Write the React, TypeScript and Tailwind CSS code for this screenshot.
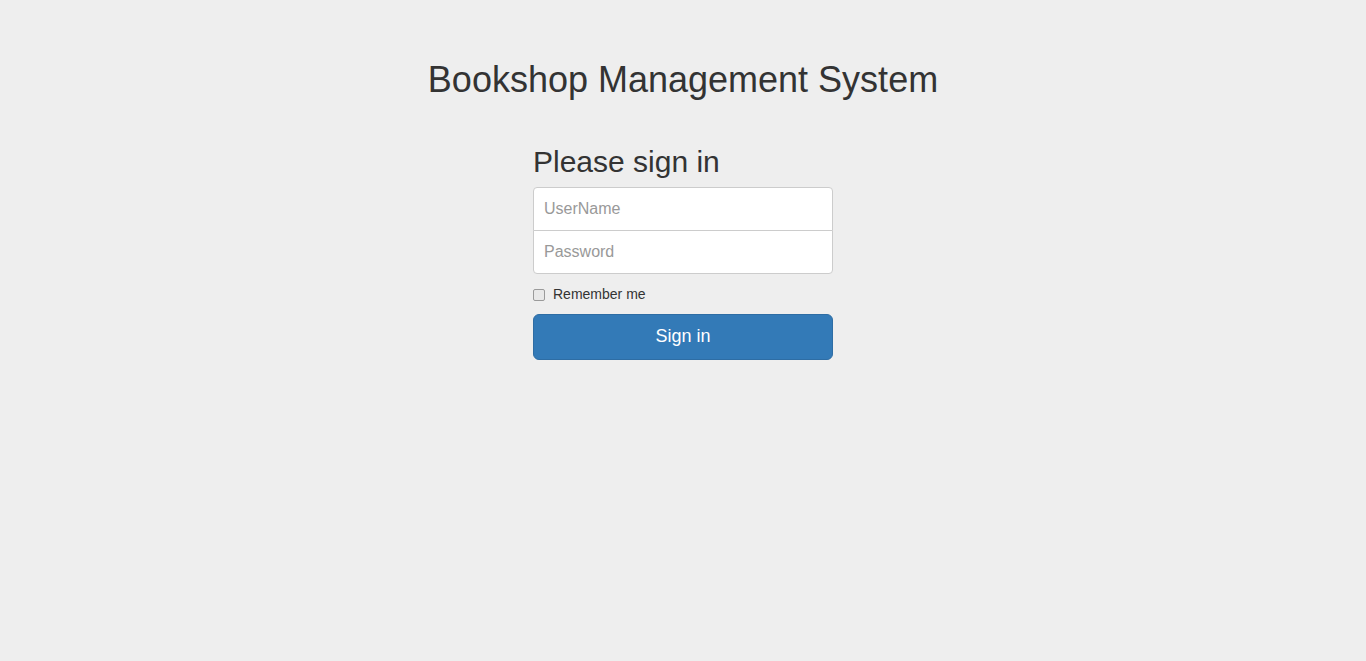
import React from 'react';

const App: React.FC = () => {
  return (
    <div className="min-h-[661px] bg-[#eeeeee] pt-10 text-[#333333] font-['Liberation_Sans',Arial,sans-serif]">
      <h1 className="mt-5 mb-[10px] text-center text-[36px] leading-[1.1] font-normal">Bookshop Management System</h1>

      <form className="mx-auto w-[330px] p-[15px]" onSubmit={e => e.preventDefault()}>
        <h2 className="mt-5 mb-[9px] text-[30px] leading-[1.1] font-normal">Please sign in</h2>
        <input
          type="text"
          placeholder="UserName"
          className="block w-full h-[44px] px-[10px] text-[16px] bg-white border border-[#cccccc] rounded-t-[4px] outline-none placeholder:text-[#999999]"
        />
        <input
          type="password"
          placeholder="Password"
          className="block w-full h-[44px] -mt-px px-[10px] text-[16px] bg-white border border-[#cccccc] rounded-b-[4px] outline-none placeholder:text-[#999999]"
        />
        <label className="flex items-center h-5 mt-[11px] mb-[9px] text-[14px]">
          <input
            type="checkbox"
            className="appearance-none w-[12px] h-[12px] m-0 mr-[8px] border border-[#9a9a9a] rounded-[2px] bg-[#e8e8e8]"
          />
          Remember me
        </label>
        <button
          type="submit"
          className="block w-full h-[46px] text-[18px] text-white bg-[#337ab7] border border-[#2e6da4] rounded-[6px]"
        >
          Sign in
        </button>
      </form>
    </div>
  );
};

export default App;
